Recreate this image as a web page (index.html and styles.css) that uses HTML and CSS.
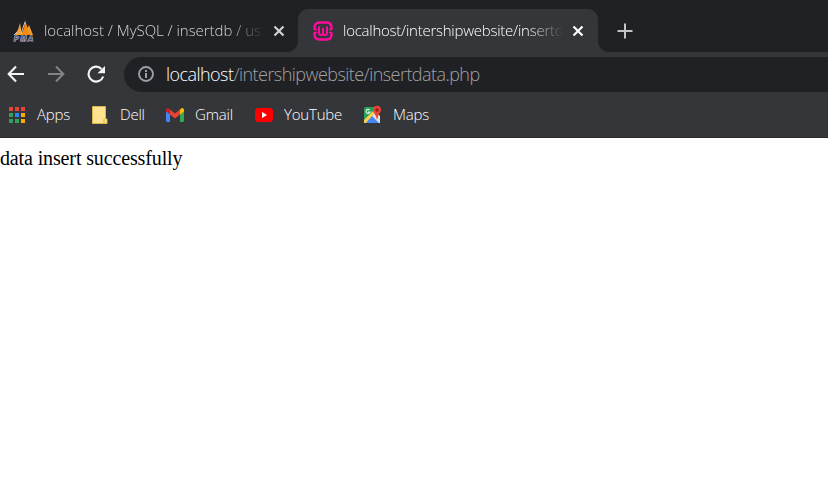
FILE: index.html
```html
<!DOCTYPE html>
<html lang="en">
<head>
<meta charset="utf-8">
<title>localhost/intershipwebsite/insertdata.php</title>
<link rel="stylesheet" href="styles.css">
</head>
<body>
<header class="browser">
  <div class="tabs">
    <div class="tab">
      <svg class="favicon" width="22" height="22" viewBox="0 0 22 22"><path d="M2 15Q6 9 7 3L9 15Z" fill="#f9a13b"/><path d="M8 15Q12 8 12 0L17 15Z" fill="#f58a0b"/><path d="M16 5L20 15H17L14 9Z" fill="#ef9c35"/><path d="M1 15L4 12M8 14L12 2" stroke="#c8c8c8"/><text class="pma" x="1" y="20.500" textLength="19">PMA</text></svg>
      <span class="title">localhost / MySQL / insertdb / us</span>
      <svg class="close" width="12" height="12" viewBox="0 0 12 12"><path d="M1.500 1.500L10.500 10.500M10.500 1.500L1.500 10.500"/></svg>
    </div>
    <div class="tab active">
      <svg class="favicon" width="20" height="20" viewBox="0 0 20 20"><path d="M1.500 8.500V6.500Q1.500 1.500 6.500 1.500H13.500Q18.500 1.500 18.500 6.500V8.500M1.500 11.500V13.500Q1.500 18.500 6.500 18.500H13.500Q18.500 18.500 18.500 13.500V11.500" fill="none" stroke="#ff0a9d" stroke-width="2.400"/><path d="M1 8.500H4M16 8.500H19M1 11.500H4M16 11.500H19" stroke="#ff0a9d" stroke-width="1.400"/><path d="M6 5.500V12Q6 14 8 14Q10 14 10 12V7M10 12Q10 14 12 14Q14 14 14 12V5.500" fill="none" stroke="#ff0a9d" stroke-width="2"/></svg>
      <span class="title">localhost/intershipwebsite/insertd</span>
      <svg class="close" width="12" height="12" viewBox="0 0 12 12"><path d="M1.500 1.500L10.500 10.500M10.500 1.500L1.500 10.500"/></svg>
    </div>
    <svg class="new-tab" width="16" height="16" viewBox="0 0 16 16"><path d="M8 .5V15.500M.5 8H15.500"/></svg>
  </div>
  <div class="toolbar">
    <svg class="nav" width="18" height="18" viewBox="0 0 18 18"><path d="M17 9H2M9 1.500L1.700 9L9 16.500"/></svg>
    <svg class="nav dim" width="18" height="18" viewBox="0 0 18 18"><path d="M1 9H16M9 1.500L16.300 9L9 16.500"/></svg>
    <svg class="nav reload" width="18" height="18" viewBox="0 0 18 18"><path d="M16.200 11.500A7.500 7.500 0 1 1 14.500 3.900"/><path class="head" d="M18 1V8.200H10.500Z"/></svg>
    <div class="address">
      <svg width="18" height="18" viewBox="0 0 18 18"><circle cx="9" cy="9" r="7" fill="none" stroke="#9aa0a6" stroke-width="1.900"/><path d="M9 8V13M9 5V7" stroke="#9aa0a6" stroke-width="2"/></svg>
      <span class="url"><span class="host">localhost</span><span class="path">/intershipwebsite/insertdata.php</span></span>
    </div>
  </div>
  <nav class="bookmarks">
    <a class="mark apps"><svg width="18" height="18" viewBox="0 0 18 18"><path fill="#ea4335" d="M1 1h4v4H1zM7 1h4v4H7zM13 1h4v4h-4z"/><path fill="#34a058" d="M1 7h4v4H1zM1 13h4v4H1zM7 13h4v4H7z"/><path fill="#2688f5" d="M7 7h4v4H7z"/><path fill="#f9ab00" d="M13 7h4v4h-4zM13 13h4v4h-4z"/></svg><span>Apps</span></a>
    <a class="mark dell"><svg width="18" height="20" viewBox="0 0 18 20"><path d="M1.500 1.500H14.500V13L16 14.500V18.500H1.500Z" fill="#ffe391" stroke="#d9b54c"/><path d="M13 18V14.500L14.500 13" fill="none" stroke="#d9ad35"/></svg><span>Dell</span></a>
    <a class="mark gmail"><svg width="18" height="14" viewBox="0 0 18 14"><path fill="#4285f4" d="M0 3L4 5V14H1.500Q0 14 0 12.500Z"/><path fill="#34a853" d="M14 5L18 3V12.500Q18 14 16.500 14H14Z"/><path fill="#ea4335" d="M4 1.500L9 5.500L14 1.500V6.500L9 10.500L4 6.500Z"/><path fill="#c5221f" d="M0 2Q0 0 2 0Q3 0 4 1.500V6.500L0 3.500Z"/><path fill="#fbbc04" d="M14 1.500Q15 0 16 0Q18 0 18 2V3.500L14 6.500Z"/></svg><span>Gmail</span></a>
    <a class="mark youtube"><svg width="18" height="14" viewBox="0 0 18 14"><rect width="18" height="14" rx="3.500" fill="#f00"/><path d="M7 4L12 7L7 10Z" fill="#fff"/></svg><span>YouTube</span></a>
    <a class="mark maps"><svg width="19" height="20" viewBox="0 0 19 20"><path d="M1 4Q1 2 3 2H16V18H1Z" fill="#25a35a"/><path d="M1 16L12 6L17 11V18H1Z" fill="#dfe2e5"/><path d="M1 15L11 5L13 7L3 18H1Z" fill="#ffd04c"/><path d="M3 18L9 11L16 18Z" fill="#4285f4"/><path d="M6.500 5A2 2 0 1 0 7 7H5" fill="none" stroke="#e4f3e8" stroke-width="1.100"/><path d="M14 15Q13.500 11 11 8Q9 5 10.500 2.500Q12 .5 14.500 .8Q18 1 18 5Q18 7 16 9Q14.500 12 14 15Z" fill="#e94335"/><circle cx="14" cy="5" r="1.700" fill="#8e241e"/></svg><span>Maps</span></a>
  </nav>
</header>
<main>data insert successfully</main>
</body>
</html>
```
FILE: styles.css
```css
* { box-sizing: border-box; }
body { margin: 0; height: 481px; overflow: hidden; background: #fff; }
svg { display: block; flex: none; }
.browser {
  height: 138px;
  background: #35363a;
  border-bottom: 1px solid #27282b;
  font-family: "Open Sans", "Noto Sans", sans-serif;
  font-weight: 300;
  color: #fff;
}
.tabs { display: flex; height: 52px; padding-top: 9px; background: #202124; }
.tab { display: flex; align-items: center; width: 298px; height: 43px; padding-left: 13px; color: #d3d5d8; }
.tab .title {
  width: 219px;
  margin-left: 9px;
  padding-bottom: 2px;
  white-space: nowrap;
  font-size: 15px;
  line-height: 24px;
  letter-spacing: -.04px;
  -webkit-mask-image: linear-gradient(to right, #000 184px, transparent 221px);
  mask-image: linear-gradient(to right, #000 184px, transparent 221px);
}
.pma { font: italic 700 7px "Liberation Sans", sans-serif; fill: #444675; stroke: #c5c4d8; stroke-width: 1px; paint-order: stroke; }
.close { margin-left: 10px; fill: none; stroke: #d0d2d5; stroke-width: 2.2; }
.active { position: relative; width: 300px; padding-left: 15px; border-radius: 10px 10px 0 0; background: #35363a; color: #fff; }
.tab.active .title { margin-left: 10px; letter-spacing: -.25px; }
.active .close { stroke: #fff; }
.active::before, .active::after { content: ""; position: absolute; bottom: 0; width: 10px; height: 10px; }
.active::before { left: -10px; background: radial-gradient(circle at 0 0, transparent 9.5px, #35363a 10px); }
.active::after { right: -10px; background: radial-gradient(circle at 100% 0, transparent 9.5px, #35363a 10px); }
.new-tab { margin: 14px 0 0 19px; fill: none; stroke: #c2c4c7; stroke-width: 2; }
.toolbar { display: flex; align-items: center; height: 44px; padding-left: 7px; }
.nav { margin-right: 22px; fill: none; stroke: #f4f5f6; stroke-width: 2.1; }
.dim { stroke: #818286; }
.reload { margin-right: 19px; }
.head { fill: #f4f5f6; stroke: none; }
.address { display: flex; flex: 1; align-items: center; height: 35px; padding-left: 13px; border-radius: 18px 0 0 18px; background: #202124; }
.url { margin-left: 11px; font-size: 18px; line-height: 28px; letter-spacing: -.55px; white-space: nowrap; }
.path { color: #a0a3a7; }
.bookmarks { display: flex; align-items: center; height: 37px; padding-left: 8px; font-size: 15px; line-height: 24px; letter-spacing: -.2px; }
.mark { display: flex; align-items: center; gap: 11px; white-space: nowrap; }
.mark span { padding-bottom: 1px; }
.apps { width: 83px; }
.dell { width: 75px; }
.gmail { width: 89px; }
.youtube { width: 108px; }
main { padding-top: 9px; font: 20px/23px "Liberation Serif", serif; letter-spacing: -.13px; color: #000; }
```
